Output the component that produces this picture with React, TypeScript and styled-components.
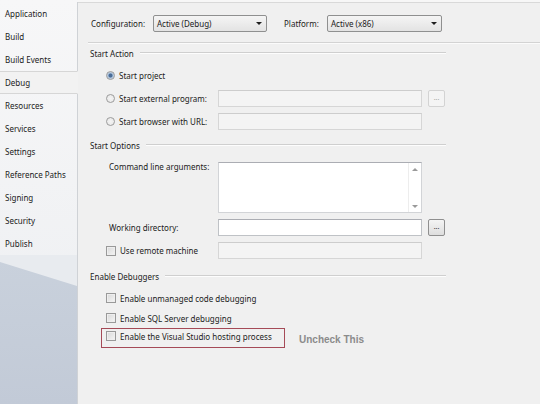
import styled, { createGlobalStyle } from 'styled-components'

const GlobalStyle = createGlobalStyle`
	html, body {
		margin: 0;
		padding: 0;
		background: #f7f7f7;
	}
	body {
		font-family: "Noto Sans", "Open Sans", sans-serif;
		font-size: 8px;
		color: #1b1b1b;
	}
`

const Window = styled.div`
	display: flex;
	width: 540px;
	height: 404px;
	overflow: hidden;
`

const Sidebar = styled.div`
	width: 78px;
	flex-shrink: 0;
	display: flex;
	flex-direction: column;
	padding-top: 2px;
	box-sizing: border-box;
	background: linear-gradient(to bottom, #f7f7f8, #eceef1);
	position: relative;
	z-index: 1;
`

const Tab = styled.div<{ $active?: boolean }>`
	height: 23px;
	flex-shrink: 0;
	display: flex;
	align-items: center;
	padding-left: 5px;
	box-sizing: border-box;
	border-right: 1px solid #cfd2d6;
	${(p) =>
		p.$active &&
		`
		background: #f2f2f2;
		border-top: 1px solid #d6d6d6;
		border-bottom: 1px solid #d6d6d6;
		border-right: 1px solid #f2f2f2;
	`}
`

const SidebarFill = styled.div`
	flex: 1;
	display: flex;
	flex-direction: column;
	border-right: 1px solid #cfd2d6;
	background: #e8ebef;
`

const Wedge = styled.div`
	flex: 1;
	margin-top: 4px;
	background: linear-gradient(to bottom, #c9d1dc, #c2cad7);
	clip-path: polygon(0 3px, 100% 27px, 100% 100%, 0 100%);
`

const Panel = styled.div`
	flex: 1;
	margin-top: 2px;
	border-top: 1px solid #d9d9d9;
	background: #f0f0f0;
	display: flex;
	flex-direction: column;
`

const Header = styled.div`
	display: flex;
	align-items: center;
	padding: 12px 0 0 13px;
`

const HeadLabel = styled.span<{ $w: number; $gap?: number }>`
	width: ${(p) => p.$w}px;
	margin-left: ${(p) => p.$gap ?? 0}px;
	flex-shrink: 0;
`

const Select = styled.div<{ $w: number }>`
	width: ${(p) => p.$w}px;
	height: 17px;
	box-sizing: border-box;
	border: 1px solid #8f9090;
	border-radius: 2px;
	background: linear-gradient(#f5f5f5, #e3e3e3);
	display: flex;
	align-items: center;
	justify-content: space-between;
	padding: 0 4px 0 3px;
`

const Arrow = styled.span`
	width: 0;
	height: 0;
	border-left: 3px solid transparent;
	border-right: 3px solid transparent;
	border-top: 3px solid #1e1e1e;
`

const Separator = styled.div`
	margin: 10px 0 0 10px;
	border-top: 1px solid #d3d3d3;
	border-bottom: 1px solid #fbfbfb;
`

const Content = styled.div`
	width: 356px;
	padding-left: 12px;
	display: flex;
	flex-direction: column;
`

const GroupTitle = styled.div<{ $top: number }>`
	display: flex;
	align-items: center;
	height: 14px;
	margin-top: ${(p) => p.$top}px;
	&::after {
		content: '';
		flex: 1;
		margin-left: 6px;
		border-top: 1px solid #cfcfcf;
		border-bottom: 1px solid #fdfdfd;
	}
`

const GroupBody = styled.div<{ $top: number }>`
	display: flex;
	flex-direction: column;
	padding-top: ${(p) => p.$top}px;
`

const Row = styled.div<{ $h?: number }>`
	display: flex;
	align-items: center;
	height: ${(p) => p.$h ?? 23}px;
`

const Option = styled.label`
	display: flex;
	align-items: center;
	gap: 4px;
	width: 128px;
	flex-shrink: 0;
	padding-left: 16px;
	box-sizing: border-box;
`

const FieldLabel = styled.span`
	width: 128px;
	flex-shrink: 0;
	padding-left: 19px;
	box-sizing: border-box;
`

const Radio = styled.span<{ $checked?: boolean }>`
	width: 9px;
	height: 9px;
	box-sizing: border-box;
	border-radius: 50%;
	border: 1px solid #9b9b9b;
	background: radial-gradient(circle, ${(p) => (p.$checked ? '#4b6d97 0 1.6px, #a9c1dc 2.4px' : '#f4f4f4 0')}, #e6e6e6);
`

const Check = styled.span`
	width: 10px;
	height: 10px;
	box-sizing: border-box;
	border: 1px solid #999;
	background: linear-gradient(135deg, #d8d8d8, #f5f5f5);
	box-shadow: inset 0 0 0 1px #eee;
	flex-shrink: 0;
`

const Input = styled.div<{ $disabled?: boolean }>`
	width: 204px;
	height: 17px;
	box-sizing: border-box;
	border: 1px solid ${(p) => (p.$disabled ? '#d6d6d6' : '#bfc2c6')};
	border-top-color: ${(p) => (p.$disabled ? '#cdcdcd' : '#abadb3')};
	background: ${(p) => (p.$disabled ? '#f4f4f4' : '#ffffff')};
`

const Browse = styled.div<{ $disabled?: boolean }>`
	width: 17px;
	height: 17px;
	margin-left: 6px;
	box-sizing: border-box;
	border: 1px solid ${(p) => (p.$disabled ? '#d3d3d3' : '#8f8f8f')};
	border-radius: 2px;
	background: ${(p) => (p.$disabled ? '#f4f4f4' : 'linear-gradient(#f4f4f4, #dedede)')};
	color: ${(p) => (p.$disabled ? '#a5a5a5' : '#333')};
	display: flex;
	align-items: center;
	justify-content: center;
	font-size: 7px;
	line-height: 1;
	padding-bottom: 2px;
`

const ArgsRow = styled.div`
	display: flex;
	align-items: flex-start;
	height: 54px;
`

const ArgsLabel = styled(FieldLabel)`
	margin-top: -1px;
`

const TextArea = styled.div`
	width: 204px;
	height: 51px;
	box-sizing: border-box;
	border: 1px solid #d2d4d7;
	border-top-color: #abadb3;
	background: #fff;
	display: flex;
	justify-content: flex-end;
`

const ScrollBar = styled.div`
	width: 12px;
	border-left: 1px solid #ededed;
	display: flex;
	flex-direction: column;
	justify-content: space-between;
	align-items: center;
	padding: 5px 0 4px;
`

const ScrollArrow = styled.span<{ $up?: boolean }>`
	width: 0;
	height: 0;
	border-left: 3px solid transparent;
	border-right: 3px solid transparent;
	${(p) => (p.$up ? 'border-bottom' : 'border-top')}: 3px solid #9a9a9a;
`

const DebugRow = styled.div`
	display: flex;
	align-items: center;
	gap: 4px;
	height: 20px;
	padding-left: 16px;
`

const Highlight = styled.div`
	display: flex;
	align-items: center;
	width: 184px;
	height: 20px;
	box-sizing: border-box;
	margin-left: 11px;
	padding: 0 0 4px 4px;
	border: 1px solid #a54a57;
	gap: 4px;
`

const Note = styled.span`
	margin-left: 14px;
	margin-top: 2px;
	font-family: "Liberation Sans", Arial, sans-serif;
	font-weight: bold;
	font-size: 10px;
	color: #8b8b8b;
`

const tabs = ['Application', 'Build', 'Build Events', 'Debug', 'Resources', 'Services', 'Settings', 'Reference Paths', 'Signing', 'Security', 'Publish']

export default function App() {
	return (
		<>
			<GlobalStyle />
			<Window>
				<Sidebar>
					{tabs.map((t) => (
						<Tab key={t} $active={t === 'Debug'}>
							{t}
						</Tab>
					))}
					<SidebarFill>
						<Wedge />
					</SidebarFill>
				</Sidebar>
				<Panel>
					<Header>
						<HeadLabel $w={62}>Configuration:</HeadLabel>
						<Select $w={114}>
							Active (Debug)
							<Arrow />
						</Select>
						<HeadLabel $w={43} $gap={17}>
							Platform:
						</HeadLabel>
						<Select $w={115}>
							Active (x86)
							<Arrow />
						</Select>
					</Header>
					<Separator />
					<Content>
						<GroupTitle $top={2}>Start Action</GroupTitle>
						<GroupBody $top={4}>
							<Row>
								<Option>
									<Radio $checked />
									Start project
								</Option>
							</Row>
							<Row>
								<Option>
									<Radio />
									Start external program:
								</Option>
								<Input $disabled />
								<Browse $disabled>...</Browse>
							</Row>
							<Row>
								<Option>
									<Radio />
									Start browser with URL:
								</Option>
								<Input $disabled />
							</Row>
						</GroupBody>

						<GroupTitle $top={5}>Start Options</GroupTitle>
						<GroupBody $top={10}>
							<ArgsRow>
								<ArgsLabel>Command line arguments:</ArgsLabel>
								<TextArea>
									<ScrollBar>
										<ScrollArrow $up />
										<ScrollArrow />
									</ScrollBar>
								</TextArea>
							</ArgsRow>
							<Row>
								<FieldLabel>Working directory:</FieldLabel>
								<Input />
								<Browse>...</Browse>
							</Row>
							<Row>
								<Option>
									<Check />
									Use remote machine
								</Option>
								<Input $disabled />
							</Row>
						</GroupBody>

						<GroupTitle $top={7}>Enable Debuggers</GroupTitle>
						<GroupBody $top={5}>
							<DebugRow>
								<Check />
								Enable unmanaged code debugging
							</DebugRow>
							<DebugRow>
								<Check />
								Enable SQL Server debugging
							</DebugRow>
							<Row $h={20}>
								<Highlight>
									<Check />
									Enable the Visual Studio hosting process
								</Highlight>
								<Note>Uncheck This</Note>
							</Row>
						</GroupBody>
					</Content>
				</Panel>
			</Window>
		</>
	)
}
